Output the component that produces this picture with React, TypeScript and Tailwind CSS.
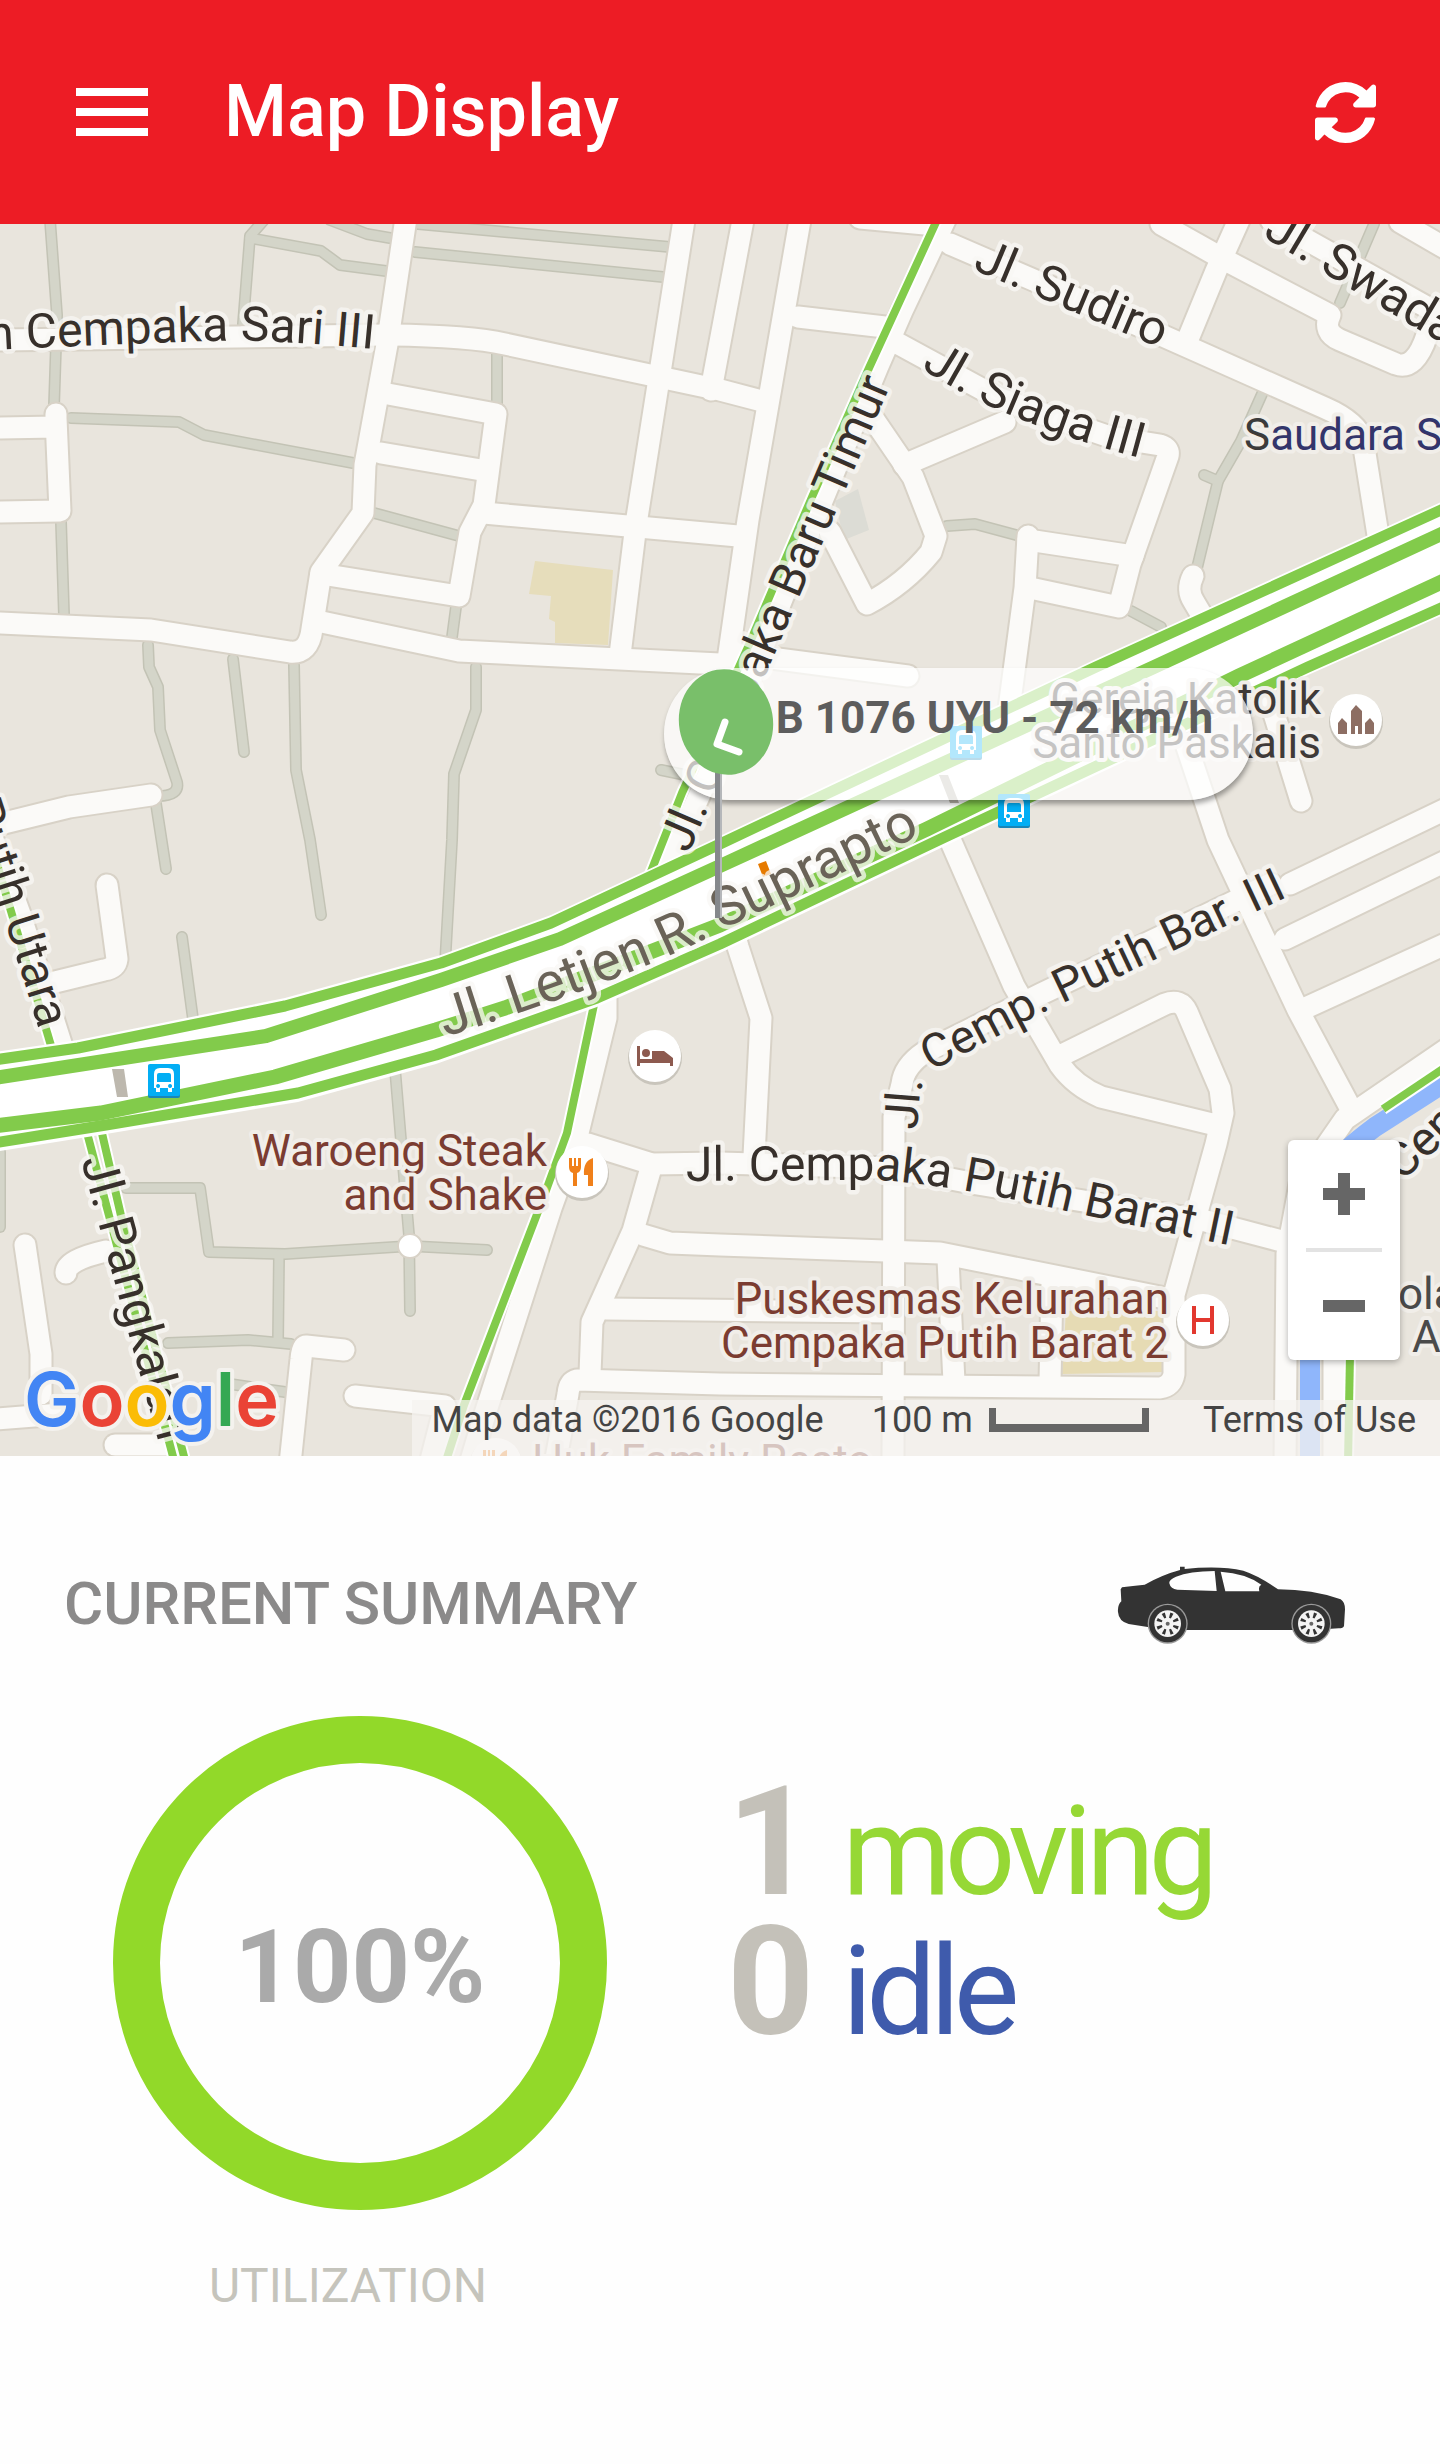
import type { ReactNode } from "react";

const LANES = [
  "M50-4L57 91L54 182",
  "M71 194L179 198L204 211L353 239",
  "M61 298L64 391",
  "M264-4L250 12L243 100",
  "M250 14L321 27L340 41L386 47",
  "M330-4L367 10L390 14",
  "M418 0L670 23",
  "M415 28L663 53",
  "M497 130V180",
  "M374 289L459 312",
  "M456 383L452 413",
  "M148 421L149 443L158 463L160 506L177 558Q180 572 158 572",
  "M156 580L166 645",
  "M233 435L244 528",
  "M294 441L296 546L310 616L321 691",
  "M476 443V486L454 550L452 616L445 740",
  "M661 546L690 552",
  "M182 713L193 795",
  "M395 845L404 952L409 1011L410 1087",
  "M487 1026L410 1022L285 1030L209 1028L200 964H126",
  "M279 1031L278 1118",
  "M168 1119L248 1116L291 1120",
  "M230 1160L285 1168",
  "M0 928V1003",
  "M947 302L975 300L1016 311",
  "M1262 170L1241 217L1218 257L1197 344",
  "M1204 251L1218 257",
  "M1131 387L1161 403",
  "M1374 0L1340 79",
];

const STREETS = [
  "M0 399L151 406L290 428Q309 430 312 405L321 348L363 289L365 241L388 115L406-6",
  "M317 397L459 427L720 440",
  "M740 430L908 452",
  "M0 204L56 203V190V194L60 287L0 288",
  "M-4 116L385 111",
  "M390 111Q470 112 505 120L720 166L766 178",
  "M388 170L496 190L484 281L470 308L459 372L321 350",
  "M381 229L487 247",
  "M484 289L738 312",
  "M684-4L661 142L636 300L620 431",
  "M743-4L711 166",
  "M800-4L748 296L727 443",
  "M798 93L885 103",
  "M860-6L925 0",
  "M945-4L902 87L878 142L800 330L740 480L700 570L664 650",
  "M950 20L1161 111L1325 184Q1357 198 1363 217L1381 330",
  "M897 119L1000 175L1110 213L1160 221Q1170 224 1168 232L1130 340L1119 383L1030 364",
  "M1028 316L1133 332",
  "M1028 312L1025 364L1007 500",
  "M870 190L913 253L936 312L931 328Q905 360 867 380L830 308",
  "M904 241L1005 198",
  "M1161 0L1225 36L1330 91Q1322 108 1340 116L1396 140Q1415 147 1427 111",
  "M1239-4L1216 47L1188 115",
  "M1271-4L1450 96",
  "M1400-2L1445 24",
  "M1193 352Q1186 366 1194 378L1207 400",
  "M1186 520L1218 616L1298 786L1353 889",
  "M1271 480L1301 577",
  "M1290 660L1450 583",
  "M1285 715L1450 635",
  "M1301 786L1450 718",
  "M930 570L952 620L1014 762L1060 841Q1075 862 1101 873L1216 901",
  "M1064 830L1165 780Q1181 774 1187 788L1220 865L1223 889L1216 920L1184 1035L1174 1071V1150Q1172 1162 1160 1164L720 1160L577 1156Q569 1158 568 1170L555 1240",
  "M1271 660L1041 770L925 828Q904 842 902 860L894 893L893 1240",
  "M588 920L652 940L720 939L893 944L977 960L1202 996L1289 1019",
  "M730 695L738 723L761 794L754 932",
  "M606 774V794L578 909L551 984L485 1190L470 1240",
  "M652 940L633 1007L592 1098L590 1150",
  "M643 1011L670 1019L720 1021L940 1029L1170 1075",
  "M606 1085L890 1088",
  "M948 1035L954 1158",
  "M1052 1060L1050 1158",
  "M1285 1240L1287 1030L1300 960L1345 895L1450 823",
  "M1334 1130V1240",
  "M25 1021L41 1130V1170",
  "M66 1049Q66 1036 106 1027",
  "M-4 1195L60 1190",
  "M115 1221H170",
  "M344 1126L306 1122Q302 1122 301 1135L290 1240",
  "M355 1172L445 1182L430 1240",
  "M107 661L117 735Q116 744 104 746L55 758",
  "M-4 601L69 583L151 571",
  "M-20 580L20 690L66 835",
];

const TRAFFIC = [
  "M937-4L869 144L812 273L748 423L682 569L650 650",
  "M595 776L567 909L544 972L464 1181L445 1240",
  "M-6 630L52 825",
  "M86 905L175 1240",
  "M101 905L122 996L186 1240",
  "M1383 885L1450 840",
  "M1350 1130L1348 1240",
];

const H1 = "M-6 836L78 824L285 782L441 739L551 699L720 620L1096 443L1450 282";
const H2 = "M-6 854L156 829L266 812L441 756L560 715L720 642L1154 443L1450 306";
const H3 = "M-6 902L101 889L275 853L436 806L505 784L720 701L927 605L1239 452L1450 354";
const H4 = "M-6 919L106 901L298 869L436 831L597 774L720 720L945 613L1308 443L1450 380";
const HIGHWAY =
  "M-6 828L78 816L285 774L441 731L551 691L720 612L1096 435L1450 274V388L1308 451L945 622L720 729L597 783L436 840L298 878L106 910L-6 928Z";

type LabelPath = { id: string; d: string; text: string; size: number; fill: string; end?: boolean };

const ROAD_LABELS: LabelPath[] = [
  { id: "sari", d: "M-40 128Q60 122 210 117Q270 115 374 125", text: "n Cempaka Sari III", size: 48, fill: "#37302b", end: true },
  { id: "sudiro", d: "M972 45L1200 141", text: "Jl. Sudiro", size: 49, fill: "#37302b" },
  { id: "siaga", d: "M921 144Q1010 204 1180 244", text: "Jl. Siaga III", size: 49, fill: "#37302b" },
  { id: "swadaya", d: "M1262 12L1500 154", text: "Jl. Swada", size: 50, fill: "#37302b" },
  { id: "timur", d: "M686 636L891 160", text: "Jl. Cempaka Baru Timur", size: 48, fill: "#37302b", end: true },
  { id: "letjen", d: "M445 813Q640 752 734 700Q840 650 970 587", text: "Jl. Letjen R. Suprapto", size: 55, fill: "#6a6358" },
  { id: "barat2", d: "M686 957L880 956Q960 962 1070 988L1290 1034", text: "Jl. Cempaka Putih Barat II", size: 48, fill: "#37302b" },
  { id: "bar3", d: "M917 906L920 866L932 847L1040 790L1340 648", text: "Jl. Cemp. Putih Bar. III", size: 47, fill: "#37302b" },
  { id: "utara", d: "M-60 500Q-12 640 39 806", text: "Putih Utara", size: 48, fill: "#37302b", end: true },
  { id: "pangkalan", d: "M81 936L170 1260", text: "Jl. Pangkalan", size: 49, fill: "#37302b" },
  { id: "cen", d: "M1402 958L1484 881", text: "Cem", size: 48, fill: "#37302b" },
];

function PlaceLabel({ x, y, fill, end, children }: { x: number; y: number; fill: string; end?: boolean; children: ReactNode }) {
  return (
    <text
      x={x}
      y={y}
      fill={fill}
      fontSize={44}
      textAnchor={end ? "end" : "start"}
      stroke="#f1eee9"
      strokeWidth={8}
      strokeLinejoin="round"
      paintOrder="stroke"
    >
      {children}
    </text>
  );
}

function Pin({ x, y, children }: { x: number; y: number; children: ReactNode }) {
  return (
    <g transform={`translate(${x} ${y})`}>
      <circle cy={2} r={27} fill="#c9c5bc" />
      <circle r={26} fill="#fff" />
      {children}
    </g>
  );
}

function Cutlery() {
  return (
    <path
      fill="#f0801a"
      d="M-13-14v9q0 5 4 6v13h4v-13q4-1 4-6v-9h-3v8h-2v-8h-2v8h-2v-8zM11-14v28h-5v-11h-4q-1-14 9-17z"
    />
  );
}

function BusStop({ x, y }: { x: number; y: number }) {
  return (
    <g transform={`translate(${x} ${y})`}>
      <rect x={-16} y={-15} width={32} height={33} rx={2} fill="#1a86b8" />
      <rect x={-16} y={-16} width={32} height={32} rx={2} fill="#03aef4" />
      <path
        fill="#fff"
        fillRule="evenodd"
        d="M-10-6q0-6 6-6h8q6 0 6 6v14h-2v4h-4v-4h-8v4h-4v-4h-2zM-7-5v7h14v-7q0-2-2-2h-10q-2 0-2 2zM-6 4a2 2 0 1 0 .1 0zM6 4a2 2 0 1 0 .1 0z"
      />
    </g>
  );
}

function StreetMap() {
  return (
    <svg viewBox="0 0 1440 1232" className="block h-auto w-full font-['Roboto',sans-serif]" role="img" aria-label="Street map">
      <rect width={1440} height={1232} fill="#e9e5dd" />
      <path fill="#e6ddbb" d="M535 337L613 346L608 421L555 419V398L549 395L551 372L529 370Z" />
      <path fill="#dcdcd5" d="M835 277L858 265L869 306L844 316Z" />
      <path fill="#e6dbb4" d="M1066 1087H1165V1148L1062 1150Z" />
      <g fill="none" strokeLinecap="round" strokeLinejoin="round">
        <g stroke="#c3c3b5" strokeWidth={12}>
          {LANES.map((d) => (
            <path key={d} d={d} />
          ))}
        </g>
        <g stroke="#d4d5c9" strokeWidth={9}>
          {LANES.map((d) => (
            <path key={d} d={d} />
          ))}
        </g>
        <g stroke="#d8d2c7" strokeWidth={25}>
          {STREETS.map((d) => (
            <path key={d} d={d} />
          ))}
        </g>
        <g stroke="#fbfaf8" strokeWidth={21}>
          {STREETS.map((d) => (
            <path key={d} d={d} />
          ))}
        </g>
        <path stroke="#8fb6fb" strokeWidth={20} d="M1310 1240V980Q1312 950 1375 903L1450 855" />
        <g stroke="#fff" strokeWidth={12} strokeLinecap="butt">
          {TRAFFIC.map((d) => (
            <path key={d} d={d} />
          ))}
        </g>
        <g stroke="#82cb4b" strokeWidth={8} strokeLinecap="butt">
          {TRAFFIC.map((d) => (
            <path key={d} d={d} />
          ))}
        </g>
        <path d={HIGHWAY} fill="#fff" />
        <g stroke="#82cb4b" strokeLinecap="butt">
          <path d={H1} strokeWidth={11} />
          <path d={H2} strokeWidth={14} />
          <path d={H3} strokeWidth={15} />
          <path d={H4} strokeWidth={11} />
        </g>
      </g>
      <circle cx={410} cy={1022} r={12} fill="#fff" stroke="#d8d2c7" strokeWidth={2} />
      <path fill="#bdb8ae" d="M112 845H124L128 873H117ZM939 551H948L959 579H950Z" />
      <path fill="#e67a00" d="M758 640L766 637L771 650L763 653Z" />

      {ROAD_LABELS.map(({ id, d, text, size, fill, end }) => (
        <g key={id}>
          <path id={id} d={d} fill="none" />
          <text
            fontSize={size}
            fill={fill}
            stroke="#f8f7f4"
            strokeOpacity={0.75}
            strokeWidth={9}
            strokeLinejoin="round"
            paintOrder="stroke"
            textAnchor={end ? "end" : "start"}
          >
            <textPath href={`#${id}`} startOffset={end ? "100%" : "0%"}>
              {text}
            </textPath>
          </text>
        </g>
      ))}

      <PlaceLabel x={1244} y={226} fill="#33356b">
        <tspan fill="#3b3b3b">S</tspan>audara S
      </PlaceLabel>
      <PlaceLabel x={1321} y={490} fill="#3f3a38" end>Gereja Katolik</PlaceLabel>
      <PlaceLabel x={1321} y={534} fill="#3f3a38" end>Santo Paskalis</PlaceLabel>
      <PlaceLabel x={547} y={942} fill="#7b3c31" end>Waroeng Steak</PlaceLabel>
      <PlaceLabel x={547} y={986} fill="#7b3c31" end>and Shake</PlaceLabel>
      <PlaceLabel x={1169} y={1090} fill="#7b3c31" end>Puskesmas Kelurahan</PlaceLabel>
      <PlaceLabel x={1169} y={1134} fill="#7b3c31" end>Cempaka Putih Barat 2</PlaceLabel>
      <PlaceLabel x={532} y={1252} fill="#7b3c31">Huk Family Resto</PlaceLabel>
      <PlaceLabel x={1398} y={1085} fill="#4a4a4a">ola</PlaceLabel>
      <PlaceLabel x={1412} y={1128} fill="#4a4a4a">A</PlaceLabel>

      <Pin x={1356} y={496}>
        <path fill="#8d6e63" d="M-5 14v-23l5-6 6 6v23h-4v-8h-3v8zM-18 14v-11l4-5 5 5v11zM9 14v-11l5-5 4 5v11z" />
      </Pin>
      <Pin x={655} y={832}>
        <path fill="#8d5a4f" d="M-18-10h3v13h12v-8h12l9 7v8h-3v-3h-30v3h-3z" />
        <circle cx={-9} cy={-3} r={4} fill="#8d5a4f" />
      </Pin>
      <Pin x={582} y={948}>
        <Cutlery />
      </Pin>
      <Pin x={496} y={1240}>
        <Cutlery />
      </Pin>
      <Pin x={1203} y={1096}>
        <path stroke="#e2382f" strokeWidth={4} d="M-9-14V14M9-14V14M-9 0H9" />
      </Pin>
      <BusStop x={966} y={518} />
      <BusStop x={1014} y={586} />
      <BusStop x={164} y={856} />
    </svg>
  );
}

function VehicleMarker() {
  return (
    <div className="absolute top-[36%] left-[46.1%] flex h-[132px] items-start rounded-full bg-white/70 pt-6 pr-10 pl-28 shadow-[1px_4px_5px_rgba(0,0,0,0.35)]">
      <svg width={110} height={260} viewBox="0 0 110 260" className="absolute top-0 left-0" aria-hidden="true">
        <path d="M54 100V250" stroke="#85888c" strokeWidth={6} />
        <path d="M57 100V250" stroke="#b5b7ba" strokeWidth={2} />
        <ellipse cx={62} cy={54} rx={47} ry={53} fill="#79bf6a" transform="rotate(-10 62 54)" />
        <path d="M61 54L53 76L75 84" fill="none" stroke="#fff" strokeWidth={7} strokeLinecap="round" strokeLinejoin="round" />
      </svg>
      <p className="text-[44px] leading-13 font-bold whitespace-nowrap text-[#5d5d5d]">B 1076 UYU - 72 km/h</p>
    </div>
  );
}

function GoogleLogo() {
  return (
    <svg width={260} height={100} viewBox="0 0 260 100" className="absolute bottom-1.5 left-6" role="img" aria-label="Google">
      <text
        x={0}
        y={76}
        fontSize={74}
        fontWeight={600}
        className="font-['Inter',sans-serif]"
        stroke="#f4f2ee"
        strokeWidth={8}
        strokeLinejoin="round"
        paintOrder="stroke"
      >
        <tspan fill="#4285f4">G</tspan>
        <tspan fill="#ea4335">o</tspan>
        <tspan fill="#fbbc05">o</tspan>
        <tspan fill="#4285f4">g</tspan>
        <tspan fill="#34a853">l</tspan>
        <tspan fill="#ea4335">e</tspan>
      </text>
    </svg>
  );
}

function ZoomControl() {
  return (
    <div className="absolute right-10 bottom-24 flex h-55 w-28 flex-col items-center rounded-md bg-white shadow-[0_2px_6px_rgba(0,0,0,0.3)]">
      <button type="button" aria-label="Zoom in" className="flex w-full flex-1 items-center justify-center">
        <svg width={42} height={42} viewBox="0 0 42 42">
          <path d="M21 0V42M0 21H42" stroke="#666" strokeWidth={12} />
        </svg>
      </button>
      <div className="h-1 w-19 bg-[#e3e3e3]" />
      <button type="button" aria-label="Zoom out" className="flex w-full flex-1 items-center justify-center">
        <svg width={42} height={12} viewBox="0 0 42 12">
          <path d="M0 6H42" stroke="#666" strokeWidth={12} />
        </svg>
      </button>
    </div>
  );
}

function MapFooter() {
  return (
    <div className="absolute right-0 bottom-0 flex h-14 items-center bg-[#f5f3f0]/75 pr-6 pb-4 pl-5 text-[36px] leading-10 whitespace-nowrap text-[#444]">
      <span>Map data ©2016 Google</span>
      <span className="ml-12">100 m</span>
      <span className="ml-4 h-6 w-40 border-x-7 border-b-8 border-[#666]" />
      <a href="#terms" className="ml-[54px]">
        Terms of Use
      </a>
    </div>
  );
}

function Wheel({ cx }: { cx: number }) {
  return (
    <g transform={`translate(${cx} 249)`}>
      <circle r={60} fill="#9a9a9a" />
      <circle r={56} fill="#333" />
      <circle r={40} fill="#f4f4f4" />
      {[22, 67, 112, 157, 202, 247, 292, 337].map((a) => (
        <path key={a} d="M-5-34h10l-2 16h-6z" fill="#333" transform={`rotate(${a})`} />
      ))}
      <circle r={6} fill="#666" />
    </g>
  );
}

function Car() {
  return (
    <svg width={232} height={80} viewBox="110 70 696 240" role="img" aria-label="Car">
      <path
        fill="#333"
        fillRule="evenodd"
        d="M128 140Q160 136 196 132Q250 102 302 88V78H316V85Q420 74 492 90Q540 106 596 146Q700 146 784 176Q797 184 797 206L794 256Q792 263 778 263L700 268H320L205 259L148 250Q118 242 116 214Q114 194 126 182L124 146ZM412 151L406 91Q330 92 290 108Q268 118 270 128Q274 146 294 147ZM438 152H540Q536 136 546 132Q500 98 424 93Z"
      />
      <Wheel cx={265} />
      <Wheel cx={696} />
    </svg>
  );
}

function Header() {
  return (
    <header className="flex h-56 items-center bg-[#ed1c25] pr-16 pl-[76px] text-white">
      <button type="button" aria-label="Menu" className="flex w-18 flex-col gap-3">
        <span className="h-2 bg-white" />
        <span className="h-2 bg-white" />
        <span className="h-2 bg-white" />
      </button>
      <h1 className="ml-19 flex-1 text-7xl font-medium">Map Display</h1>
      <button type="button" aria-label="Refresh">
        <svg width={61} height={61} viewBox="0 0 1536 1536" fill="currentColor">
          <path d="M1511 928q0 5-1 7-64 268-268 434.5t-478 166.5q-146 0-282.5-55t-243.5-157l-129 129q-19 19-45 19t-45-19-19-45v-448q0-26 19-45t45-19h448q26 0 45 19t19 45-19 45l-137 137q71 66 161 102t187 36q134 0 250-65t186-179q11-17 53-117 8-23 30-23h192q13 0 22.5 9.5t9.5 22.5zm25-800v448q0 26-19 45t-45 19h-448q-26 0-45-19t-19-45 19-45l138-138q-148-137-349-137-134 0-250 65t-186 179q-11 17-53 117-8 23-30 23h-199q-13 0-22.5-9.5t-9.5-22.5v-7q65-268 270-434.5t480-166.5q146 0 284 55.5t245 156.5l130-129q19-19 45-19t45 19 19 45z" />
        </svg>
      </button>
    </header>
  );
}

const STATUS = [
  { count: 1, label: "moving", tone: "text-[#96d835]" },
  { count: 0, label: "idle", tone: "text-[#3f5bac]" },
];

function Summary() {
  return (
    <section className="pt-27 pb-32">
      <div className="flex items-center justify-between pr-[92px] pl-16">
        <h2 className="text-[60px] leading-16 font-medium text-[#8b8a8a]">CURRENT SUMMARY</h2>
        <Car />
      </div>
      <div className="mt-18 flex items-start pl-[113px]">
        <div className="flex flex-col items-center">
          <div className="flex size-[494px] items-center justify-center rounded-full border-[47px] border-[#92d929] pt-2">
            <span className="text-[102px] leading-none font-bold text-[#aaa]">100%</span>
          </div>
          <p className="mt-12 mr-6 text-[48px] leading-14 text-[#c5c4bc]">UTILIZATION</p>
        </div>
        <ul className="mt-14 ml-30">
          {STATUS.map(({ count, label, tone }) => (
            <li key={label} className="flex h-35 items-baseline leading-35">
              <span className="text-[152px] font-bold text-[#c4c1b9]">{count}</span>
              <span className={`ml-7 text-[124px] tracking-tighter ${tone}`}>{label}</span>
            </li>
          ))}
        </ul>
      </div>
    </section>
  );
}

export default function App() {
  return (
    <main className="min-h-screen bg-[#fefefe] font-['Roboto',sans-serif]">
      <Header />
      <section className="relative overflow-hidden" aria-label="Map">
        <StreetMap />
        <VehicleMarker />
        <GoogleLogo />
        <ZoomControl />
        <MapFooter />
      </section>
      <Summary />
    </main>
  );
}
